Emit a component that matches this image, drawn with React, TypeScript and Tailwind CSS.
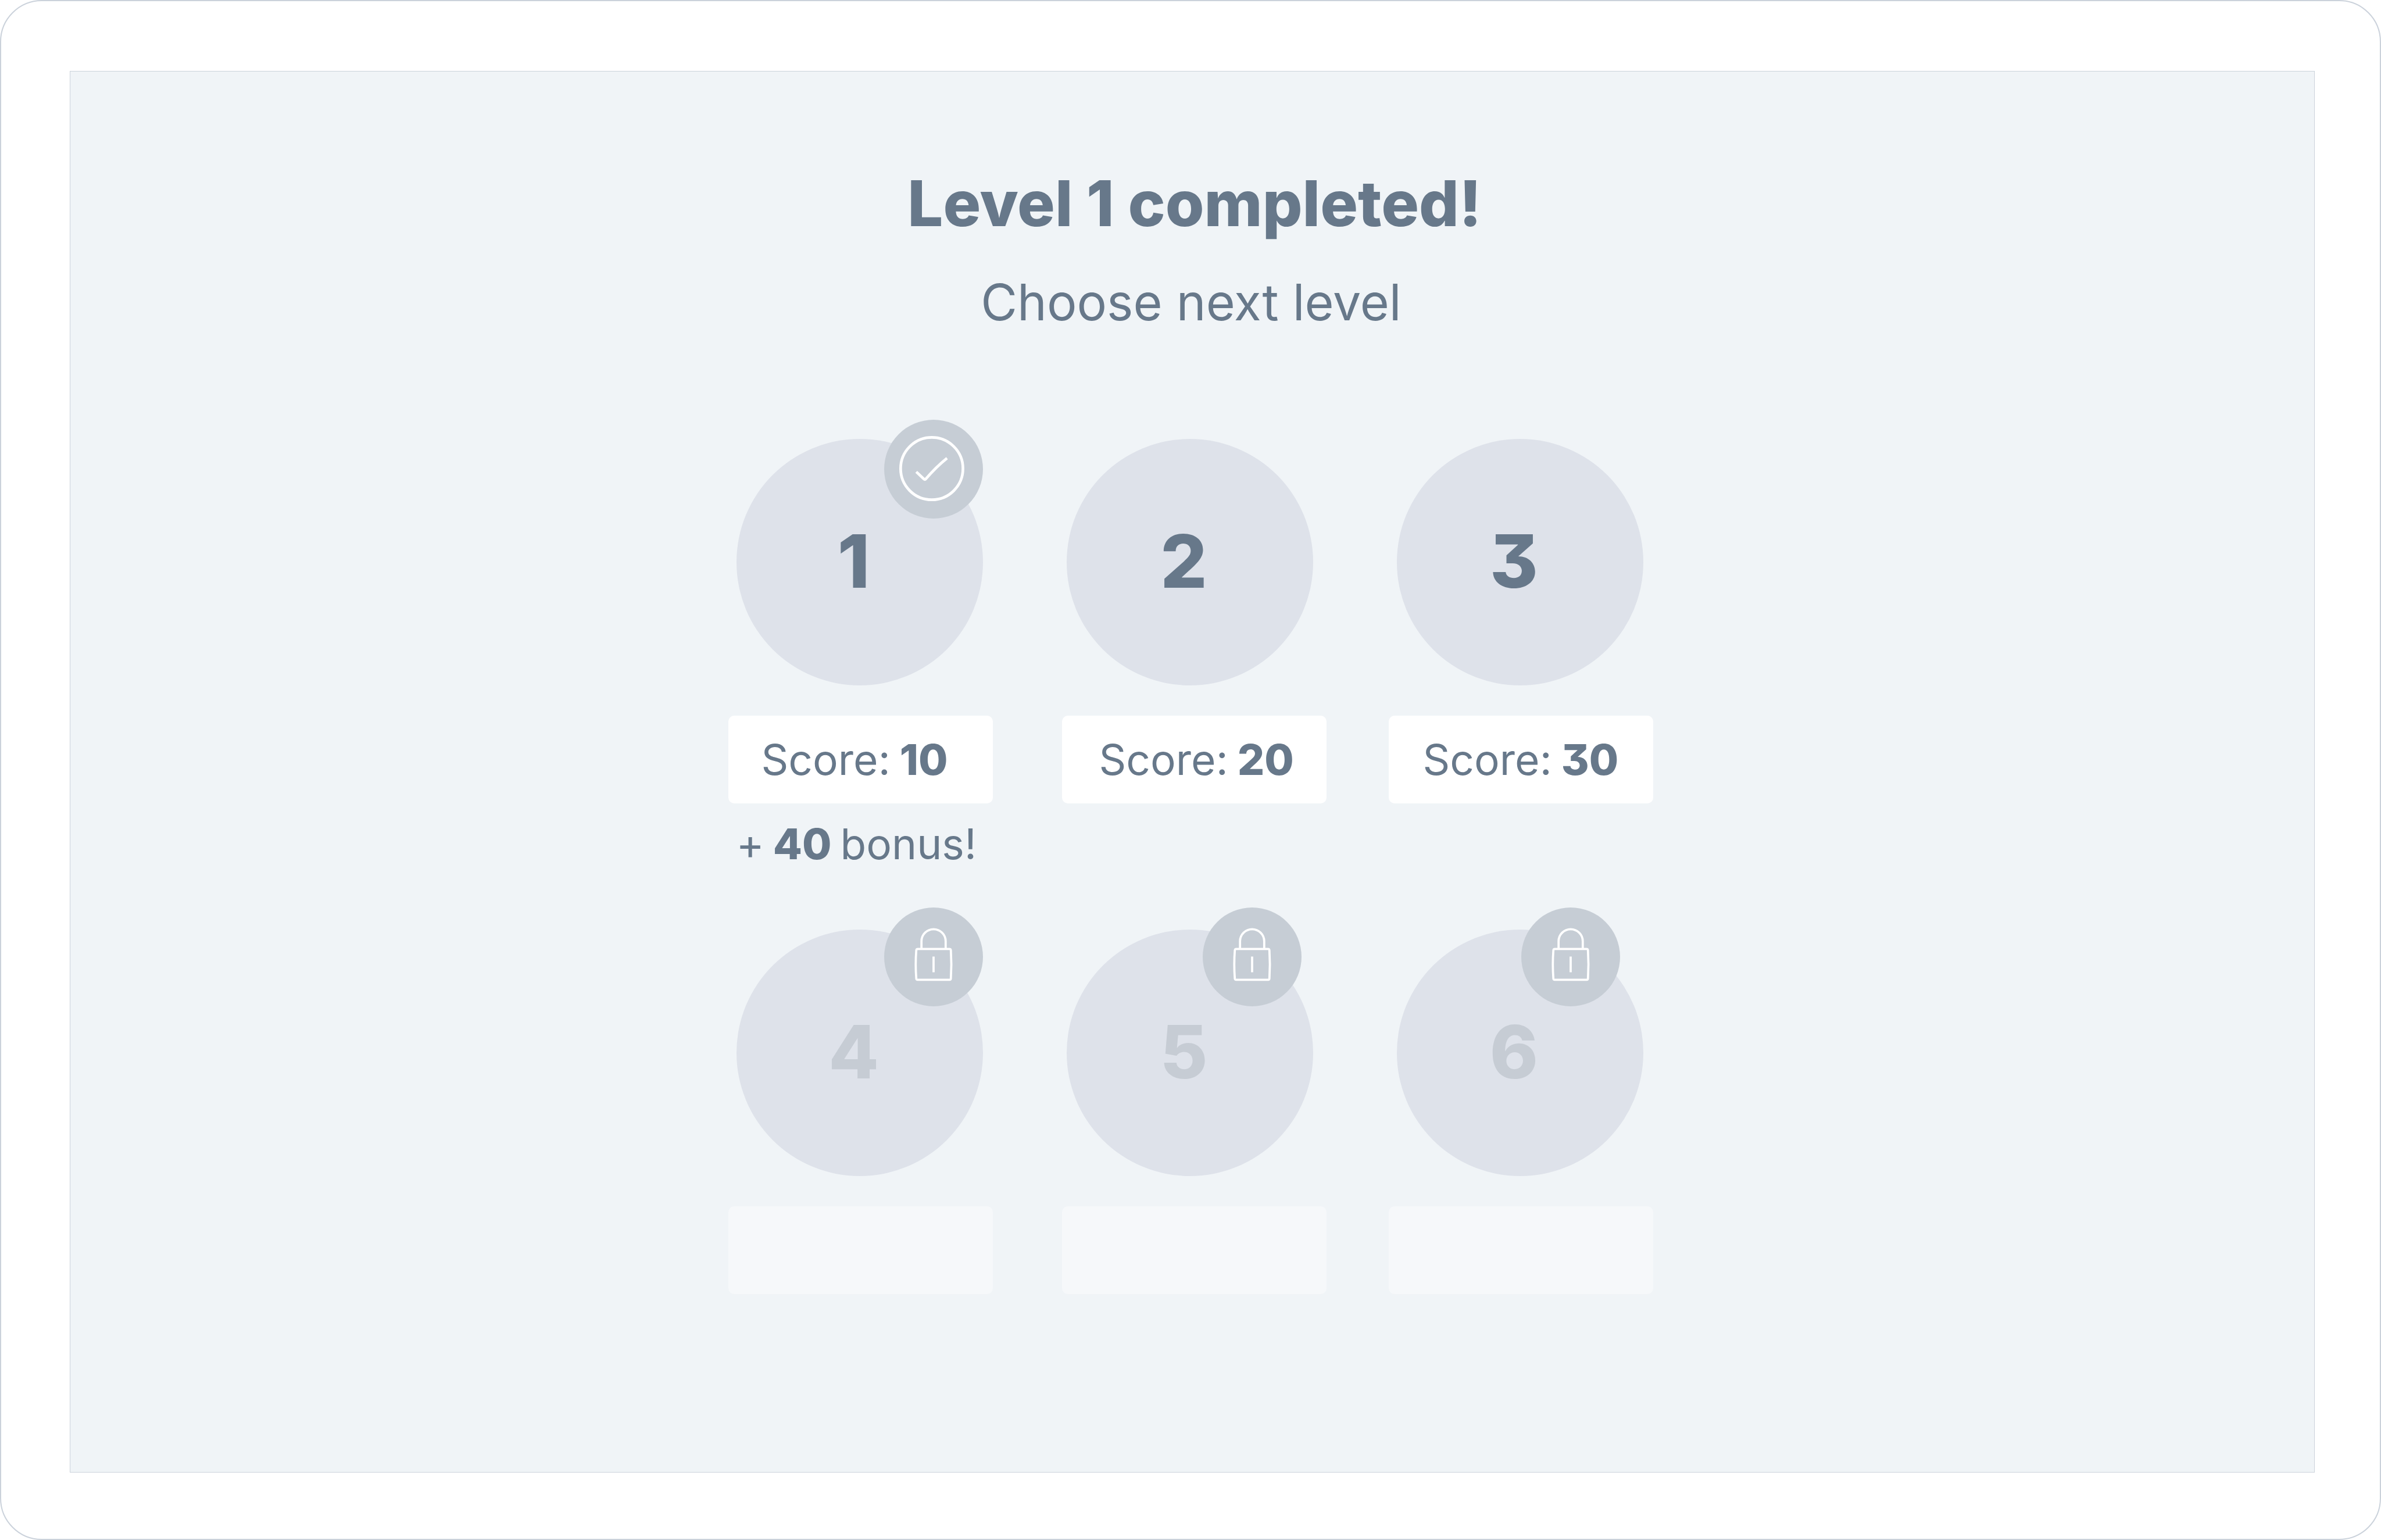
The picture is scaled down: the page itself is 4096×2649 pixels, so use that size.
type Level = {
  id: number;
  score?: number;
  bonus?: number;
  status: 'done' | 'open' | 'locked';
};

const rows: Level[][] = [
  [
    { id: 1, score: 10, bonus: 40, status: 'done' },
    { id: 2, score: 20, status: 'open' },
    { id: 3, score: 30, status: 'open' },
  ],
  [
    { id: 4, status: 'locked' },
    { id: 5, status: 'locked' },
    { id: 6, status: 'locked' },
  ],
];

// Per-column alignment of the disc, its badge and the score text.
const columns = [
  { column: '', disc: 'ml-[14px]', badge: 'left-[254px]', score: 'pl-[57px]' },
  { column: 'ml-[119px]', disc: 'ml-[8px]', badge: 'left-[234px]', score: 'pl-[64px]' },
  { column: 'ml-[107px]', disc: 'ml-[14px]', badge: 'left-[214px]', score: 'pl-[59px]' },
];

function CheckIcon() {
  return (
    <svg viewBox="0 0 723 723" className="size-full" fill="none" stroke="white" strokeLinejoin="round" aria-hidden="true">
      <circle cx="348.5" cy="357.5" r="228" strokeWidth="20" />
      <path d="M235 381 L291 434 Q298 440 305 433 Q379 346 460 281" strokeWidth="20" />
    </svg>
  );
}

function LockIcon() {
  return (
    <svg viewBox="0 0 723 723" className="size-full" fill="none" stroke="white" strokeWidth="16" aria-hidden="true">
      <path d="M273 304 V247 A88.5 88.5 0 0 1 450 247 V304" />
      <path d="M245 304 H479 Q487 304 488 313 Q495 416 488 520 Q487 529 479 529 H245 Q236 529 235 520 Q227 416 235 313 Q236 304 245 304 Z" />
      <path d="M361.5 359 V474" />
    </svg>
  );
}

function LevelCell({ level, index }: { level: Level; index: number }) {
  const place = columns[index];
  const locked = level.status === 'locked';
  return (
    <li className={`w-[455px] ${place.column}`}>
      <button
        type="button"
        disabled={locked}
        aria-label={`Level ${level.id}`}
        className={`relative flex size-[424px] items-center justify-center rounded-full bg-[#dee2ea] pr-[20px] pb-1 text-[126px] leading-none font-extrabold ${place.disc} ${locked ? 'text-[#c6ccd4]' : 'text-[#67788a]'}`}
      >
        {level.id}
        {level.status !== 'open' && (
          <span className={`absolute size-[170px] rounded-full bg-[#c6cdd5] ${place.badge} ${locked ? '-top-[38px]' : '-top-[33px]'}`}>
            {locked ? <LockIcon /> : <CheckIcon />}
          </span>
        )}
      </button>
      <p
        className={`mt-[52px] flex h-[151px] items-center gap-[16px] rounded-[10px] text-[73px] whitespace-nowrap ${place.score} ${locked ? 'bg-[#f6f8fa]' : 'bg-white'}`}
      >
        {level.score !== undefined && (
          <>
            <span>Score:</span>
            <b className="font-extrabold">{level.score}</b>
          </>
        )}
      </p>
      {level.bonus !== undefined && (
        <p className="mt-[26px] flex gap-[15px] pl-[14px] text-[73px] leading-[88px] whitespace-nowrap">
          <span>+</span>
          <b className="font-extrabold">{level.bonus}</b>
          <span>bonus!</span>
        </p>
      )}
    </li>
  );
}

export default function App() {
  return (
    <div className="flex min-h-screen rounded-[72px] border-2 border-[#cbd2db] bg-white pt-[120px] pr-[112px] pb-[114px] pl-[118px] font-['Inter',sans-serif] text-[#67788a] [font-feature-settings:'cv09']">
      <main className="flex flex-1 flex-col items-center border border-[#cbd2db] bg-[#f0f4f7] pt-[161px]">
        <h1 className="pl-2 text-[108px] leading-[132px] font-extrabold">Level 1 completed!</h1>
        <p className="mt-[52px] pr-1 text-[86px] leading-[104px]">Choose next level</p>
        <div className="mt-[183px] flex flex-col gap-[103px] pr-1.5">
          {rows.map((row, i) => (
            <ul key={i} className="flex">
              {row.map((level, j) => (
                <LevelCell key={level.id} level={level} index={j} />
              ))}
            </ul>
          ))}
        </div>
      </main>
    </div>
  );
}
